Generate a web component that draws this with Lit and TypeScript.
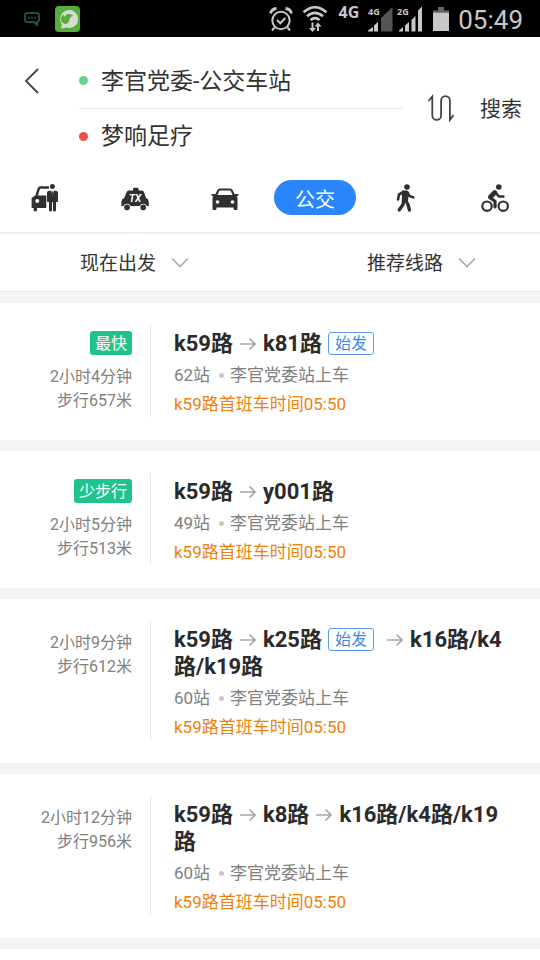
import { LitElement, html, css, svg, nothing } from "lit";
import { customElement, property, state } from "lit/decorators.js";
import { classMap } from "lit/directives/class-map.js";

interface Leg {
  name: string;
  origin?: boolean;
}

interface Plan {
  badge?: string;
  time: string;
  walk: string;
  legs: Leg[];
  stops: string;
}

const PLANS: Plan[] = [
  { badge: "最快", time: "2小时4分钟", walk: "步行657米", legs: [{ name: "k59路" }, { name: "k81路", origin: true }], stops: "62站" },
  { badge: "少步行", time: "2小时5分钟", walk: "步行513米", legs: [{ name: "k59路" }, { name: "y001路" }], stops: "49站" },
  { time: "2小时9分钟", walk: "步行612米", legs: [{ name: "k59路" }, { name: "k25路", origin: true }, { name: "k16路/k4路/k19路" }], stops: "60站" },
  { time: "2小时12分钟", walk: "步行956米", legs: [{ name: "k59路" }, { name: "k8路" }, { name: "k16路/k4路/k19路" }], stops: "60站" },
];

const MODES = [
  {
    id: "ride",
    label: "专车",
    icon: svg`
      <path d="M5.500 12 7.800 4.600Q8.200 3.500 9.300 3.500H18" fill="none" stroke="currentColor" stroke-width="2.400"/>
      <path d="M.6 14 4 11.500H15.300V24H6v2.300a1 1 0 0 1-1 1H3.600a1 1 0 0 1-1-1V24H.6z"/>
      <circle cx="6.300" cy="17" r="1.900" fill="#fff"/>
      <circle cx="21.400" cy="2.600" r="2.500"/>
      <path d="M18.200 6.800h6.500a2.300 2.300 0 0 1 2.300 2.300V17a1.200 1.200 0 0 1-2 .8V26a1.500 1.500 0 0 1-3 .2v-8h-1v8a1.500 1.500 0 0 1-3-.2v-8.200a1.200 1.200 0 0 1-2-.8V9.100a2.300 2.300 0 0 1 2.200-2.300z"/>
      <path d="M20.300 6.800h2.400l-1.200 5.400z" fill="#fff"/>
      <path d="M21.500 7.500v4" stroke="currentColor" stroke-width=".9"/>`,
  },
  {
    id: "taxi",
    label: "出租车",
    icon: svg`
      <path d="M12 6.500V5a1.200 1.200 0 0 1 1.200-1.200h3.200A1.200 1.200 0 0 1 17.600 5v1.500h3.200q1.600 0 2.200 1.600l2 6q2.800 1 2.800 3.800V22H.4v-4.100q0-2.800 2.800-3.800l2.400-6q.6-1.600 2.200-1.600z"/>
      <circle cx="6" cy="23.300" r="3.600" fill="#fff"/><circle cx="22.200" cy="23.300" r="3.600" fill="#fff"/>
      <circle cx="6" cy="23.400" r="2.800"/><circle cx="22.200" cy="23.400" r="2.800"/>
      <text class="taxi-text" x="14.200" y="18" text-anchor="middle" fill="#fff">TX</text>`,
  },
  {
    id: "drive",
    label: "驾车",
    icon: svg`
      <path d="M5 11.500 7.400 6.400Q7.800 5.500 8.800 5.500H19.200Q20.200 5.500 20.600 6.400L23 11.500" fill="none" stroke="currentColor" stroke-width="2.200"/>
      <path d="M.5 10h4l.5 1h18l.5-1h4v1.700h-1.700l.7 2v11.400a1 1 0 0 1-1 1h-1.900a1 1 0 0 1-1-1V23.500H5.400v1.600a1 1 0 0 1-1 1H2.500a1 1 0 0 1-1-1V13.700l.7-2H.5z"/>
      <circle cx="6.500" cy="18" r="1.800" fill="#fff"/><circle cx="21.500" cy="18" r="1.800" fill="#fff"/>`,
  },
  { id: "bus", label: "公交", icon: null },
  {
    id: "walk",
    label: "步行",
    icon: svg`
      <circle cx="16" cy="3" r="2.800"/>
      <path d="M11 6.600h5l2.200 1.600-1.400 9.800h-6z"/>
      <g fill="none" stroke="currentColor" stroke-linejoin="round" stroke-linecap="round">
        <path d="M12.500 8 8 10.500 7 15.500" stroke-width="2.600"/>
        <path d="M16.300 8.500 18.500 12 22.400 13.400" stroke-width="2.600"/>
        <path d="M12.700 16.500 12 20.500 8.200 26" stroke-width="3.300"/>
        <path d="M14.700 16.500 17 20.500 18.400 26" stroke-width="3.300"/>
      </g>`,
  },
  {
    id: "bike",
    label: "骑行",
    icon: svg`
      <circle cx="17.800" cy="3" r="2.800"/>
      <g fill="none" stroke="currentColor" stroke-linejoin="round" stroke-linecap="round">
        <circle cx="6" cy="22.200" r="4.700" stroke-width="2.200"/>
        <circle cx="22.200" cy="22.200" r="4.700" stroke-width="2.200"/>
        <path d="M13.800 8.500 9.400 13" stroke-width="4.800"/>
        <path d="M15 9 17.800 12.500H22.400" stroke-width="2.500"/>
        <path d="M9.500 14 14 17.300V23" stroke-width="3.200"/>
      </g>`,
  },
];

@customElement("status-bar")
class StatusBar extends LitElement {
  static styles = css`
    :host {
      display: flex;
      align-items: center;
      justify-content: space-between;
      height: 37px;
      padding: 0 17px 0 24px;
      background: #000;
      color: #c8c8c8;
      font-family: Roboto, sans-serif;
    }
    .group { display: flex; align-items: center; }
    .notes { gap: 15px; }
    .system { gap: 9px; }
    .net { font: 700 16px/24px "Noto Sans", sans-serif; align-self: flex-start; margin-left: 2px; }
    .small { font: 700 9px "Noto Sans", sans-serif; }
    .clock { font-size: 26px; line-height: 36px; font-weight: 400; padding-top: 2px; }
    svg { display: block; }
    .signals { display: flex; gap: 4px; }
  `;

  render() {
    return html`
      <div class="group notes">
        <svg width="16" height="16" viewBox="0 0 16 16" fill="none" stroke="#2d6e42" stroke-width="1.400">
          <path d="M3 2h10q2 0 2 2v5q0 2-2 2v3l-3-3H3q-2 0-2-2V4q0-2 2-2z" />
          <path d="M4 6.700h1.500M7.200 6.700h1.500M10.500 6.700H12" />
        </svg>
        <svg width="25" height="26" viewBox="0 0 25 26">
          <rect width="25" height="26" rx="4" fill="#55ad3c" />
          <path d="M6 22.500 7 18.500A9 9 0 1 1 11.500 21.600z" fill="#d4dcd0" />
          <path d="M8 8q1 3 2.500 3-.5-3 3.500-3 3 0 4.500 2-3.500 0-4 3.500-1 4.500-4.500 4.500Q6 17 5.800 12.500z" fill="#55ad3c" />
        </svg>
      </div>
      <div class="group system">
        <svg width="24" height="26" viewBox="0 0 24 26" fill="none" stroke="currentColor" stroke-width="2">
          <circle cx="12" cy="14.500" r="8.700" />
          <path d="m8 14 3.300 3.300 5-5.300M5.500 21.500 3 24.500M18.500 21.500l2.500 3" />
          <path d="M1.500 7.500Q2.500 3 7.500 2.500M22.500 7.500Q21.500 3 16.500 2.500" stroke-width="2.800" />
        </svg>
        <svg width="26" height="28" viewBox="0 0 26 28" fill="none" stroke="currentColor" stroke-width="2.600">
          <path d="M1.500 7.300Q13-2.800 24.500 7.300M5 11.300q8-6.800 16 0M8.500 15q4.500-3.800 9 0" />
          <path d="M10.500 17.500V25M16 26v-6.500" stroke-width="2" />
          <path d="m7 23 3.500 4 3.500-4zM12.500 21.500 16 17.500l3.500 4z" fill="currentColor" stroke="none" />
        </svg>
        <span class="net">4G</span>
        <div class="signals">
          <svg width="25" height="26" viewBox="0 0 25 26" fill="currentColor">
            <text class="small" x="0" y="9">4G</text>
            <path d="M0 25.500v-1l5-3.500v4.500zM6 25.500v-6l4-3.500v9.500z" />
            <path d="M13 25.500V12L24.500 1v24.500z" fill="#555" />
          </svg>
          <svg width="27" height="26" viewBox="0 0 27 26" fill="currentColor">
            <text class="small" x="0" y="9">2G</text>
            <path d="M2 25.500v-1l4-3.500v4.500zM8 25.500V19.500l4-3.500v9.500zM14.500 25.500V14l4-4v15.500zM21 25.500V4.500l4-4v25z" />
          </svg>
        </div>
        <svg width="16" height="26" viewBox="0 0 16 26" fill="currentColor">
          <path d="M5 1h6v3.500H5zM0 4.500h16v2H0z" fill="#666" />
          <path d="M0 6.500h16V25H0z" />
        </svg>
        <time class="clock">05:49</time>
      </div>
    `;
  }
}

@customElement("route-card")
class RouteCard extends LitElement {
  @property({ attribute: false }) plan!: Plan;

  static styles = css`
    :host {
      display: grid;
      grid-template-columns: 132px 1fr;
      column-gap: 18px;
      padding: 22px 24px 23px 0;
      background: #fff;
    }
    .summary {
      display: flex;
      flex-direction: column;
      align-items: flex-end;
      padding-top: 6px;
      font-size: 16px;
      line-height: 24px;
      color: #808080;
    }
    .summary.plain { padding-top: 10px; }
    .badge {
      margin-bottom: 10px;
      padding: 1px 5px 0;
      border-radius: 3px;
      background: #1ec48c;
      color: #fff;
      line-height: 23px;
    }
    .detail {
      border-left: 1px solid #e8e8e8;
      padding: 5px 0 0 23px;
    }
    .title {
      margin: 0;
      font-size: 22px;
      line-height: 27px;
      font-weight: 700;
      color: #2b2b2b;
    }
    .arrow { width: 16px; height: 14px; margin: 0 7px; }
    .tag {
      display: inline-block;
      box-sizing: border-box;
      height: 23px;
      margin: 2px 6px 0;
      padding: 0 6px;
      border: 1px solid #5a9bf0;
      border-radius: 3px;
      color: #3f87ee;
      font-size: 16px;
      line-height: 22px;
      font-weight: 400;
      vertical-align: top;
    }
    .line { display: flex; align-items: center; margin: 6px 0 0; font-size: 17px; line-height: 24px; color: #808080; }
    .dot { width: 5px; height: 5px; margin: 0 6px 0 9px; border-radius: 50%; background: #c8c8c8; }
    .first-bus { margin-top: 5px; padding-bottom: 1px; color: #ee8208; }
  `;

  render() {
    const p = this.plan;
    return html`
      <div class=${classMap({ summary: true, plain: !p.badge })}>
        ${p.badge ? html`<span class="badge">${p.badge}</span>` : nothing}
        <span>${p.time}</span>
        <span>${p.walk}</span>
      </div>
      <div class="detail">
        <h2 class="title">${p.legs.map((leg, i) => html`${i
          ? html`<svg class="arrow" viewBox="0 0 16 14" fill="none" stroke="#a6a6a6" stroke-width="1.600"><path d="M0 7h15M9.500 1.500 15 7l-5.500 5.500" /></svg>`
          : nothing}${leg.name}${leg.origin ? html`<span class="tag">始发</span>` : nothing}`)}</h2>
        <p class="line"><span>${p.stops}</span><i class="dot"></i><span>李官党委站上车</span></p>
        <p class="line first-bus">k59路首班车时间05:50</p>
      </div>
    `;
  }
}

@customElement("app-root")
class AppRoot extends LitElement {
  @state() private mode = "bus";
  @state() private from = "李官党委-公交车站";
  @state() private to = "梦响足疗";

  static styles = css`
    :host {
      display: block;
      min-height: 100vh;
      background: #fff;
      color: #333;
      font-family: Roboto, "Noto Sans CJK SC", sans-serif;
    }
    button, input, select {
      font: inherit;
      color: inherit;
      background: none;
      border: 0;
      padding: 0;
      margin: 0;
      min-width: 0;
    }
    button { cursor: pointer; }
    svg { display: block; }
    .search {
      display: grid;
      grid-template-columns: 54px 1fr auto auto;
      column-gap: 25px;
      padding: 16px 18px 0 0;
    }
    .back { height: 55px; padding-left: 24px; }
    .fields { min-width: 0; }
    .field { display: flex; align-items: center; gap: 13px; height: 55px; }
    .field + .field { border-top: 1px solid #e3e3e3; height: 54px; }
    .pin { flex: none; width: 9px; height: 9px; border-radius: 50%; background: #62d690; }
    .pin.end { background: #f04c48; }
    .field input { flex: 1; padding-top: 2px; font-size: 23px; line-height: 32px; outline: 0; }
    .swap, .go { align-self: center; }
    .go { padding-top: 2px; font-size: 21px; line-height: 32px; }
    .modes {
      display: grid;
      grid-template-columns: repeat(6, 1fr);
      justify-items: center;
      padding: 17px 0;
      border-bottom: 2px solid #efefef;
    }
    .mode {
      display: flex;
      align-items: center;
      justify-content: center;
      width: 82px;
      height: 35px;
      padding-top: 1px;
      border-radius: 18px;
      font-size: 20px;
      color: #303030;
    }
    .mode.active { background: #2b86fb; color: #fff; }
    .taxi-text { font: italic 700 10px Roboto, sans-serif; }
    .filters {
      display: flex;
      justify-content: space-between;
      padding: 13px 64px 13px 80px;
      border-bottom: 1px solid #e4e4e4;
    }
    .filter { display: flex; align-items: center; gap: 14px; height: 31px; }
    .filter select { appearance: none; padding-top: 2px; font-size: 19px; line-height: 28px; }
    .plans {
      display: flex;
      flex-direction: column;
      gap: 11px;
      padding: 11px 0;
      background: #f4f4f4;
    }
  `;

  private swap() {
    [this.from, this.to] = [this.to, this.from];
  }

  private filter(label: string, option: string) {
    return html`
      <label class="filter">
        <select aria-label=${label}><option>${option}</option></select>
        <svg width="18" height="12" viewBox="0 0 18 12" fill="none" stroke="#a8a8a8" stroke-width="1.600"><path d="m1 1.500 8 8 8-8" /></svg>
      </label>
    `;
  }

  render() {
    return html`
      <status-bar></status-bar>
      <header>
        <div class="search">
          <button class="back" aria-label="返回">
            <svg width="16" height="26" viewBox="0 0 16 26" fill="none" stroke="#444" stroke-width="1.800"><path d="M14 1 2 13l12 12" /></svg>
          </button>
          <div class="fields">
            <div class="field"><i class="pin"></i><input aria-label="起点" .value=${this.from} /></div>
            <div class="field"><i class="pin end"></i><input aria-label="终点" .value=${this.to} /></div>
          </div>
          <button class="swap" aria-label="交换起终点" @click=${this.swap}>
            <svg width="28" height="28" viewBox="0 0 28 28" fill="none" stroke="#444" stroke-width="1.800">
              <path d="M1.500 7 5.300 2.500V21.500a4.400 4.400 0 0 0 8.800 0V6.500a4.400 4.400 0 0 1 8.800 0V26L26.500 21" />
            </svg>
          </button>
          <button class="go">搜索</button>
        </div>
        <nav class="modes">
          ${MODES.map((m) => html`
            <button class=${classMap({ mode: true, active: m.id === this.mode })} aria-label=${m.label} @click=${() => (this.mode = m.id)}>
              ${m.icon ? html`<svg width="28" height="28" viewBox="0 0 28 28" fill="currentColor">${m.icon}</svg>` : m.label}
            </button>`)}
        </nav>
      </header>
      <div class="filters">
        ${this.filter("出发时间", "现在出发")}
        ${this.filter("线路偏好", "推荐线路")}
      </div>
      <main class="plans">
        ${PLANS.map((plan) => html`<route-card .plan=${plan}></route-card>`)}
      </main>
    `;
  }
}
